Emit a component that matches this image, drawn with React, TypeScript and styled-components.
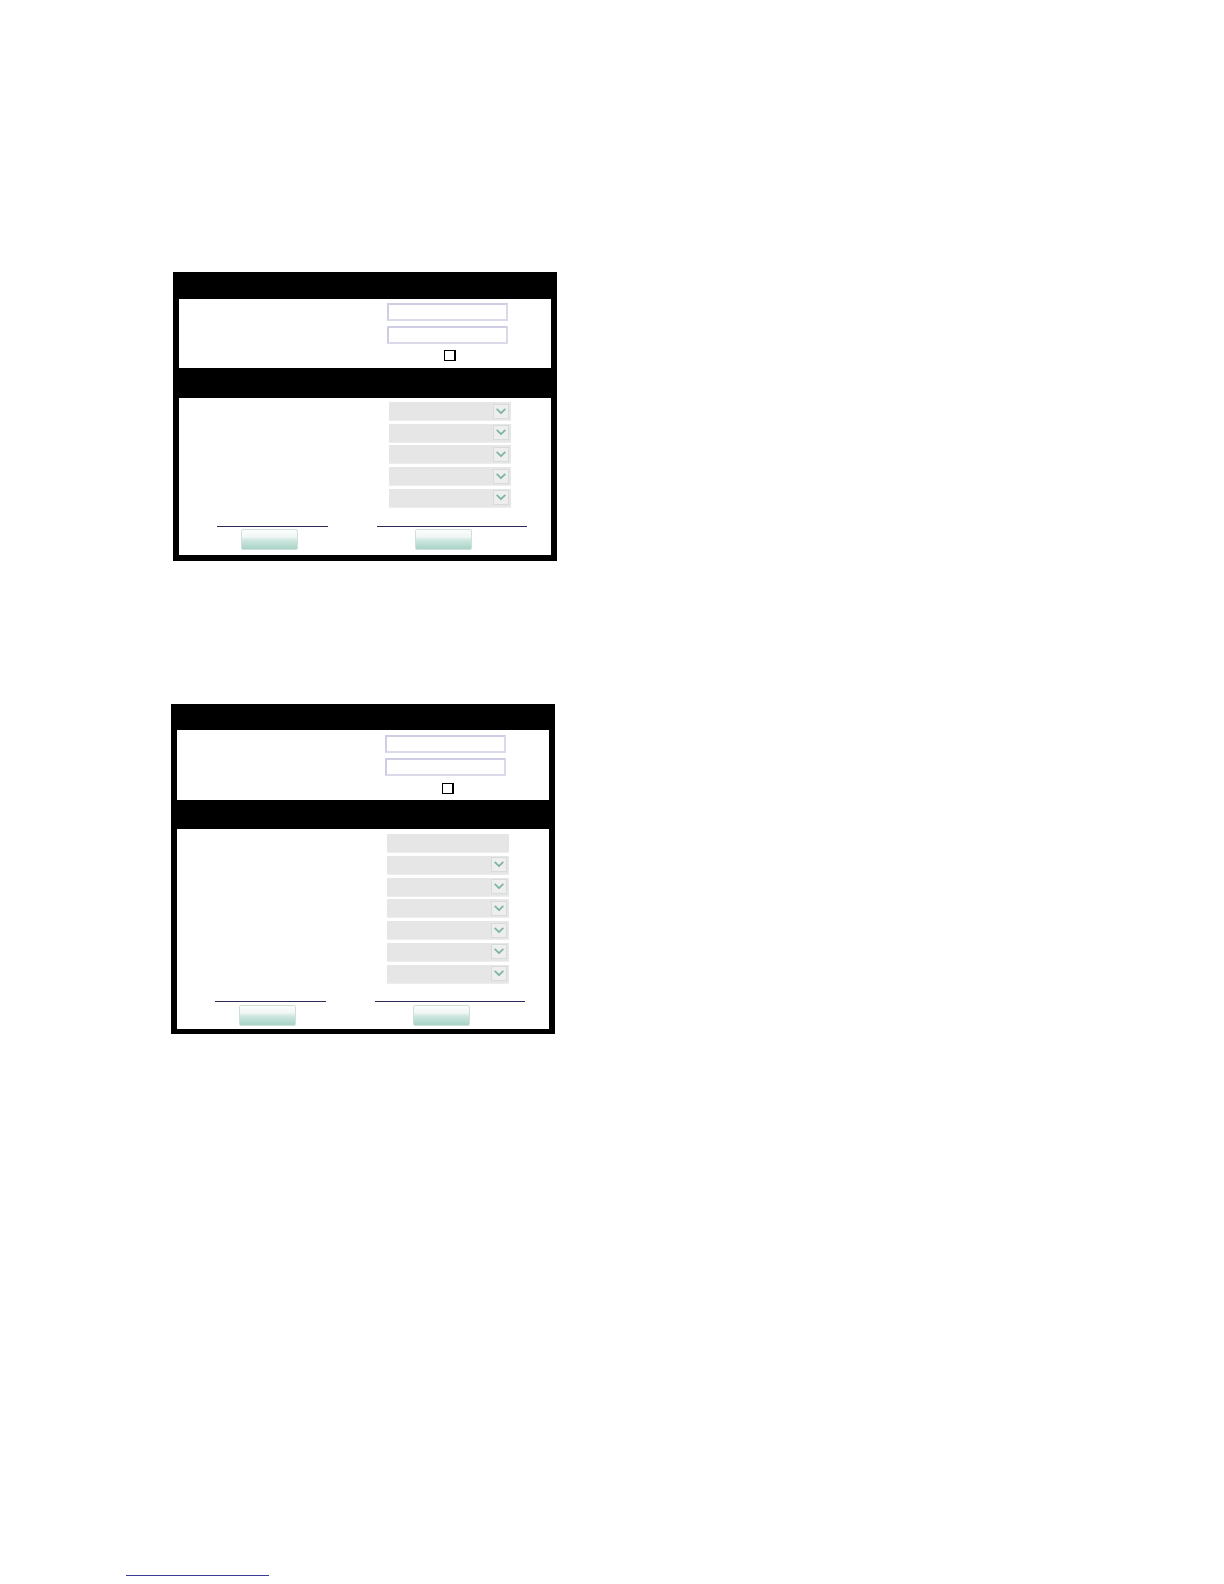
import React from "react";
import styled, { createGlobalStyle } from "styled-components";

const Global = createGlobalStyle`
  html, body { margin: 0; padding: 0; background: #ffffff; }
  body { font-family: "Liberation Sans", Arial, sans-serif; }
`;

const Page = styled.div`
  width: 1224px;
  min-height: 1584px;
  box-sizing: border-box;
  padding-top: 272px;
  display: flex;
  flex-direction: column;
`;

const Panel = styled.div<{ $left: number; $top: number; $bottom: number }>`
  margin-left: ${(p) => p.$left}px;
  margin-top: ${(p) => p.$top}px;
  width: 384px;
  background: #000;
  box-sizing: border-box;
  padding: 0 6px ${(p) => p.$bottom}px 6px;
  display: flex;
  flex-direction: column;
`;

const HeaderBar = styled.div<{ $h: number }>`
  height: ${(p) => p.$h}px;
  margin: 0 -6px;
  background: #000;
`;

const Section = styled.div<{ $h: number; $pt: number }>`
  height: ${(p) => p.$h}px;
  box-sizing: border-box;
  padding-top: ${(p) => p.$pt}px;
  background: #fff;
  display: flex;
  flex-direction: column;
`;

const FieldColumn = styled.div<{ $offset: number; $gap: number }>`
  margin-left: ${(p) => p.$offset}px;
  display: flex;
  flex-direction: column;
  gap: ${(p) => p.$gap}px;
`;

const TextInput = styled.div`
  width: 121px;
  height: 18px;
  box-sizing: border-box;
  background: #fff;
  border: 2px solid #dadaea;
  border-top-color: #cdcde3;
  border-left-color: #cdcde3;
`;

const CheckRow = styled.div<{ $mt: number }>`
  display: flex;
  padding-left: 57px;
  margin-top: ${(p) => p.$mt}px;
`;

const CheckBox = styled.div`
  width: 12px;
  height: 11px;
  box-sizing: border-box;
  border: 1.5px solid #000;
  border-right-width: 2.5px;
  background: #fff;
`;

const SelectBox = styled.div`
  width: 122px;
  height: 19px;
  box-sizing: border-box;
  background: #e6e6e6;
  border-bottom: 1px solid #ededed;
  display: flex;
  align-items: center;
  justify-content: flex-end;
  padding-right: 2px;
`;

const ArrowBox = styled.div`
  width: 16px;
  height: 15px;
  box-sizing: border-box;
  border: 1px solid #d6dcd9;
  background: #eeeeee;
  display: flex;
  align-items: center;
  justify-content: center;
`;

const ActionsRow = styled.div<{ $mt: number }>`
  margin-top: ${(p) => p.$mt}px;
  display: flex;
`;

const ActionCell = styled.div<{ $offset: number; $width: number }>`
  margin-left: ${(p) => p.$offset}px;
  width: ${(p) => p.$width}px;
  display: flex;
  flex-direction: column;
`;

const Rule = styled.div`
  height: 1.5px;
  background: #2e2b5c;
`;

const ActionButton = styled.div<{ $offset: number; $mt: number }>`
  margin-top: ${(p) => p.$mt}px;
  margin-left: ${(p) => p.$offset}px;
  width: 57px;
  height: 21px;
  box-sizing: border-box;
  border: 1px solid #cfe0db;
  border-radius: 2px;
  background: linear-gradient(
    to bottom,
    #fbfdfd 0%,
    #f1f7f5 35%,
    #cde6df 55%,
    #a9d3c8 100%
  );
`;

const FooterRule = styled.div`
  margin-top: auto;
  margin-bottom: 8px;
  margin-left: 126px;
  width: 143px;
  height: 1px;
  background: #3c3c96;
`;

const Chevron = () => (
  <svg width="10" height="7" viewBox="0 0 10 7">
    <path
      d="M1.2 1.4 L5 5.2 L8.8 1.4"
      fill="none"
      stroke="#7fb3a6"
      strokeWidth="1.8"
      strokeLinecap="round"
      strokeLinejoin="round"
    />
  </svg>
);

type PanelSpec = {
  left: number;
  top: number;
  bottom: number;
  head1: number;
  sec1: number;
  sec1Pt: number;
  inputGap: number;
  checkMt: number;
  head2: number;
  sec2: number;
  sec2Pt: number;
  selectGap: number;
  selects: boolean[];
  actionsMt: number;
  buttonMt: number;
};

const FormPanel = ({ spec }: { spec: PanelSpec }) => (
  <Panel $left={spec.left} $top={spec.top} $bottom={spec.bottom}>
    <HeaderBar $h={spec.head1} />
    <Section $h={spec.sec1} $pt={spec.sec1Pt}>
      <FieldColumn $offset={208} $gap={spec.inputGap}>
        <TextInput />
        <TextInput />
        <CheckRow $mt={spec.checkMt}>
          <CheckBox />
        </CheckRow>
      </FieldColumn>
    </Section>
    <HeaderBar $h={spec.head2} />
    <Section $h={spec.sec2} $pt={spec.sec2Pt}>
      <FieldColumn $offset={210} $gap={spec.selectGap}>
        {spec.selects.map((hasArrow, i) => (
          <SelectBox key={i}>
            {hasArrow && (
              <ArrowBox>
                <Chevron />
              </ArrowBox>
            )}
          </SelectBox>
        ))}
      </FieldColumn>
      <ActionsRow $mt={spec.actionsMt}>
        <ActionCell $offset={38} $width={111}>
          <Rule />
          <ActionButton $offset={24} $mt={spec.buttonMt} />
        </ActionCell>
        <ActionCell $offset={49} $width={150}>
          <Rule />
          <ActionButton $offset={38} $mt={spec.buttonMt} />
        </ActionCell>
      </ActionsRow>
    </Section>
  </Panel>
);

const panels: PanelSpec[] = [
  {
    left: 173,
    top: 0,
    bottom: 6,
    head1: 27,
    sec1: 69,
    sec1Pt: 4,
    inputGap: 5,
    checkMt: 1,
    head2: 30,
    sec2: 157,
    sec2Pt: 4,
    selectGap: 2.7,
    selects: [true, true, true, true, true],
    actionsMt: 18,
    buttonMt: 2,
  },
  {
    left: 171,
    top: 143,
    bottom: 5,
    head1: 26,
    sec1: 70,
    sec1Pt: 5,
    inputGap: 4.5,
    checkMt: 2.5,
    head2: 29,
    sec2: 200,
    sec2Pt: 5,
    selectGap: 2.8,
    selects: [false, true, true, true, true, true, true],
    actionsMt: 17,
    buttonMt: 2.5,
  },
];

export default function App() {
  return (
    <>
      <Global />
      <Page>
        {panels.map((p, i) => (
          <FormPanel key={i} spec={p} />
        ))}
        <FooterRule />
      </Page>
    </>
  );
}
